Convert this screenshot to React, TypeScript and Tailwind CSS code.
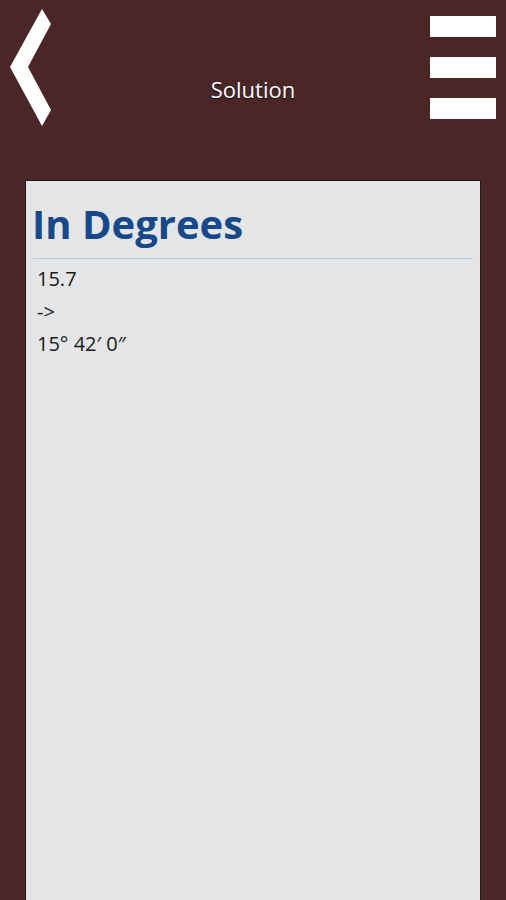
import React from "react";

export default function App() {
  return (
    <div
      className="w-[506px] h-[900px] bg-[#4a2627] overflow-hidden flex flex-col"
      style={{ fontFamily: '"Open Sans", "Noto Sans", sans-serif' }}
    >
      <div className="h-[180px] shrink-0 grid grid-cols-[76px_1fr_76px] items-start">
        <div>
          <svg width="60" height="135" viewBox="0 0 60 135">
            <polygon points="42,9 51,24 28,67 51,110 42,126 10,67" fill="#ffffff" />
          </svg>
        </div>
        <div className="text-center text-white text-[22px] leading-[30px] pt-[74px] [text-shadow:0_1px_1px_rgba(0,0,0,0.7)]">
          Solution
        </div>
        <div className="flex flex-col gap-[20px] pt-[16px]">
          <div className="w-[66px] h-[21px] bg-white" />
          <div className="w-[66px] h-[21px] bg-white" />
          <div className="w-[66px] h-[21px] bg-white" />
        </div>
      </div>
      <div className="mx-[25px] flex-1 bg-[#e3e5e7] border border-b-0 border-[#2a1515]">
        <div className="pt-[23px] pl-[6px] text-[40px] leading-[40px] font-bold text-[#17488a]">
          In Degrees
        </div>
        <div className="mt-[14px] mx-[7px] h-[1px] bg-[#b9c7d9]" />
        <div className="mt-[4px] pl-[11px] text-[20px] leading-[32.5px] text-[#1a1a1a]">
          <div>15.7</div>
          <div>-&gt;</div>
          <div>15° 42′ 0″</div>
        </div>
      </div>
    </div>
  );
}
